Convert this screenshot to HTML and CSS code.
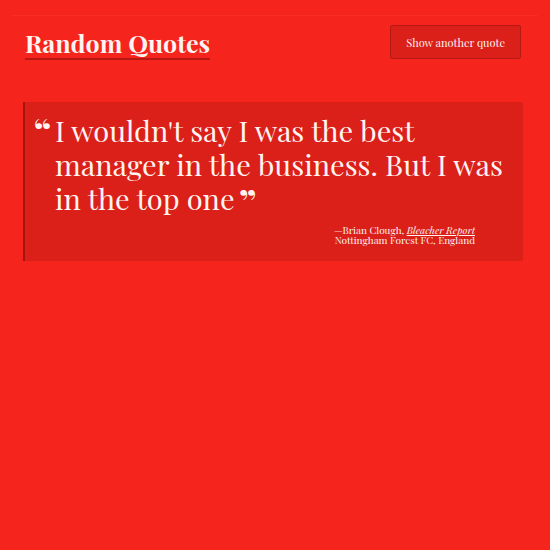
FILE: index.html
```
<!DOCTYPE html>
<html lang="en">
<head>
<meta charset="utf-8">
<meta name="viewport" content="width=device-width, initial-scale=1">
<title>Random Quotes</title>
<link rel="stylesheet" href="styles.css">
</head>
<body>
<main class="container">
  <header class="header">
    <h1 class="title">Random Quotes</h1>
    <button class="load-quote" type="button">Show another quote</button>
  </header>
  <section class="quote-box">
    <p class="quote">I wouldn't say I was the best manager in the business. But I was in the top one</p>
    <p class="source">—Brian Clough, <a class="citation" href="#">Bleacher Report</a><br>Nottingham Forest FC, England</p>
  </section>
</main>
</body>
</html>
```
FILE: styles.css
```
* {
  box-sizing: border-box;
}

body {
  margin: 0;
  padding: 15px 12px;
  background: #f5241d;
  color: #fff4f2;
  font-family: "Playfair Display", "Liberation Serif", serif;
}

.container {
  padding: 9px 15px 10px 11px;
  border-top: 1px solid #f82e25;
}

.header {
  display: flex;
  justify-content: space-between;
  align-items: flex-start;
  padding: 0 2px;
}

.title {
  margin: 3px 0 0;
  border-bottom: 2px solid #b81713;
  font-size: 25px;
  line-height: 30px;
  font-weight: 700;
}

.load-quote {
  height: 34px;
  padding: 2px 15px 0;
  border: 1px solid #b51815;
  border-radius: 2px;
  background: #db2019;
  color: inherit;
  font: 11px/16px "Playfair Display", "Liberation Serif", serif;
}

.quote-box {
  margin-top: 42px;
  padding: 11px 16px 16px 30px;
  border-left: 2px solid #a51410;
  border-radius: 0 2px 2px 0;
  background: #db2019;
}

.quote {
  position: relative;
  margin: 0;
  font-size: 29px;
  line-height: 34px;
}

.quote::before,
.quote::after {
  font-size: 34px;
  font-weight: 900;
  line-height: 0;
  vertical-align: -4px;
}

.quote::before {
  content: "“";
  position: absolute;
  top: 17px;
  left: -21px;
}

.quote::after {
  content: "”";
  margin-left: 5px;
}

.source {
  margin: 10px 32px 0 0;
  font-size: 10px;
  line-height: 10px;
  text-align: right;
}

.citation {
  color: inherit;
  font-style: italic;
}
```
